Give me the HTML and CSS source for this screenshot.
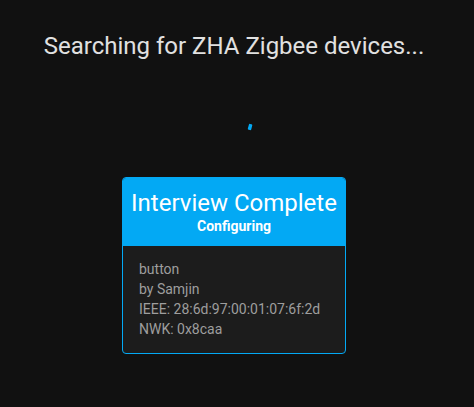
FILE: index.html
```html
<!DOCTYPE html>
<html>
<head>
<meta charset="utf-8">
<link rel="stylesheet" href="styles.css">
</head>
<body>
<div class="page">
  <h1 class="title">Searching for ZHA Zigbee devices...</h1>
  <div class="spinner">
    <svg width="40" height="10" viewBox="0 0 40 10"><rect x="34.3" y="2" width="3.5" height="6" rx="1" transform="rotate(15 36 5)" fill="#03a9f4"/></svg>
  </div>
  <div class="card">
    <div class="card-header">
      <div class="status">Interview Complete</div>
      <div class="sub">Configuring</div>
    </div>
    <div class="card-body">
      <div>button</div>
      <div>by Samjin</div>
      <div>IEEE: 28:6d:97:00:01:07:6f:2d</div>
      <div>NWK: 0x8caa</div>
    </div>
  </div>
</div>
</body>
</html>
```
FILE: styles.css
```css
html, body {
  margin: 0;
  padding: 0;
  background: #111111;
  font-family: Roboto, "Noto Sans", sans-serif;
}
.page {
  display: flex;
  flex-direction: column;
  align-items: center;
  padding-top: 30px;
  padding-right: 6px;
}
.title {
  margin: 0;
  font-size: 24px;
  font-weight: 400;
  line-height: 32px;
  color: #e1e1e1;
}
.spinner {
  margin-top: 60px;
  height: 10px;
  display: flex;
}
.card {
  margin-top: 45px;
  width: 224px;
  box-sizing: border-box;
  border: 1px solid #03a9f4;
  border-radius: 4px;
  background: #1c1c1c;
  overflow: hidden;
}
.card-header {
  background: #03a9f4;
  color: #ffffff;
  text-align: center;
  height: 68px;
  padding-top: 10px;
  box-sizing: border-box;
}
.status {
  font-size: 24px;
  line-height: 30px;
}
.sub {
  font-size: 14px;
  font-weight: 700;
  line-height: 16px;
}
.card-body {
  padding: 13px 16px 14px;
  font-size: 14px;
  line-height: 20px;
  color: #9e9e9e;
}
```
